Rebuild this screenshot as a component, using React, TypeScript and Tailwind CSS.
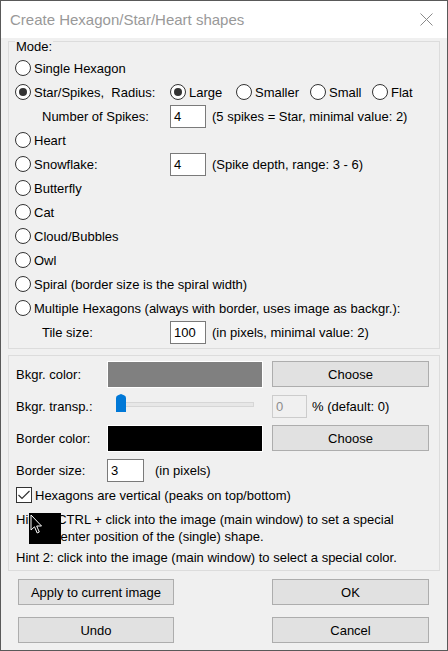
import React from "react";

const font = { fontFamily: '"Liberation Sans", Arial, sans-serif' };

function Radio({ checked, label, className = "" }: { checked?: boolean; label: string; className?: string }) {
  return (
    <div className={`flex items-center gap-[3px] ${className}`}>
      <span className="flex h-[16px] w-[16px] shrink-0 items-center justify-center rounded-full border border-[#333333] bg-white">
        {checked ? <span className="h-[8px] w-[8px] rounded-full bg-[#333333]" /> : null}
      </span>
      <span className="whitespace-pre">{label}</span>
    </div>
  );
}

function TextBox({ value, w = "w-[36px]", disabled }: { value: string; w?: string; disabled?: boolean }) {
  return (
    <div
      className={`flex h-[23px] shrink-0 items-center pl-[3px] ${w} ${
        disabled ? "border border-[#cccccc] bg-[#f0f0f0] text-[#8d8d8d]" : "border border-[#7a7a7a] bg-white"
      }`}
    >
      {value}
    </div>
  );
}

function Button({ label, w = "w-[157px]" }: { label: string; w?: string }) {
  return (
    <div className={`flex h-[26px] shrink-0 items-center justify-center border border-[#adadad] bg-[#e1e1e1] ${w}`}>
      {label}
    </div>
  );
}

export default function App() {
  return (
    <div
      className="flex h-[651px] w-[448px] flex-col overflow-hidden border border-[#595959] bg-[#f0f0f0] text-[13px] leading-[15px] text-black"
      style={font}
    >
      {/* title bar */}
      <div className="flex h-[37px] shrink-0 items-center justify-between bg-white pl-[9px] pr-[14px]">
        <span className="text-[15px] text-[#999999]">Create Hexagon/Star/Heart shapes</span>
        <svg width="13" height="13" viewBox="0 0 13 13">
          <path d="M0.5 0.5 L12.5 12.5 M12.5 0.5 L0.5 12.5" stroke="#8a8a8a" strokeWidth="1" fill="none" />
        </svg>
      </div>

      {/* Mode group */}
      <div className="relative mx-[7px] mt-[3px] border border-[#dcdcdc] pb-[4px] pl-[6px] pt-[14px]">
        <span className="absolute left-[6px] top-[-3px] bg-[#f0f0f0] px-[1px]">Mode:</span>
        <div className="flex h-[24px] items-center">
          <Radio label="Single Hexagon" />
        </div>
        <div className="flex h-[24px] items-center">
          <Radio checked label="Star/Spikes,  Radius:" className="w-[155px]" />
          <Radio checked label="Large" className="w-[66px]" />
          <Radio label="Smaller" className="w-[74px]" />
          <Radio label="Small" className="w-[62px]" />
          <Radio label="Flat" />
        </div>
        <div className="flex h-[24px] items-center">
          <span className="w-[155px] pl-[27px]">Number of Spikes:</span>
          <TextBox value="4" />
          <span className="ml-[6px]">(5 spikes = Star, minimal value: 2)</span>
        </div>
        <div className="flex h-[24px] items-center">
          <Radio label="Heart" />
        </div>
        <div className="flex h-[24px] items-center">
          <Radio label="Snowflake:" className="w-[155px]" />
          <TextBox value="4" />
          <span className="ml-[6px]">(Spike depth, range: 3 - 6)</span>
        </div>
        <div className="flex h-[24px] items-center">
          <Radio label="Butterfly" />
        </div>
        <div className="flex h-[24px] items-center">
          <Radio label="Cat" />
        </div>
        <div className="flex h-[24px] items-center">
          <Radio label="Cloud/Bubbles" />
        </div>
        <div className="flex h-[24px] items-center">
          <Radio label="Owl" />
        </div>
        <div className="flex h-[24px] items-center">
          <Radio label="Spiral (border size is the spiral width)" />
        </div>
        <div className="flex h-[24px] items-center">
          <Radio label="Multiple Hexagons (always with border, uses image as backgr.):" />
        </div>
        <div className="flex h-[24px] items-center">
          <span className="w-[155px] pl-[27px]">Tile size:</span>
          <TextBox value="100" />
          <span className="ml-[6px]">(in pixels, minimal value: 2)</span>
        </div>
      </div>

      {/* Colour group */}
      <div className="relative mx-[7px] mt-[6px] h-[216px] border border-[#dcdcdc] pl-[7px] pt-[4px]">
        <div className="flex h-[28px] items-center">
          <span className="w-[91px]">Bkgr. color:</span>
          <div className="h-[27px] w-[156px] border border-white bg-[#808080]" />
          <div className="ml-[9px]">
            <Button label="Choose" />
          </div>
        </div>
        <div className="mt-[4px] flex h-[28px] items-center">
          <span className="w-[91px]">Bkgr. transp.:</span>
          <div className="relative h-[28px] w-[156px]">
            <div className="absolute left-[9px] top-[10px] h-[5px] w-[138px] border border-[#d6d6d6] bg-[#e7e7e7]" />
            <svg className="absolute left-[9px] top-[2px]" width="10" height="18" viewBox="0 0 10 18">
              <path d="M0 4 Q0 2 2 1.2 L5 0 L8 1.2 Q10 2 10 4 V18 H0 Z" fill="#0078d7" />
            </svg>
          </div>
          <div className="ml-[9px]">
            <TextBox value="0" w="w-[35px]" disabled />
          </div>
          <span className="ml-[5px]">% (default: 0)</span>
        </div>
        <div className="mt-[4px] flex h-[28px] items-center">
          <span className="w-[91px]">Border color:</span>
          <div className="h-[27px] w-[156px] border border-white bg-black" />
          <div className="ml-[9px]">
            <Button label="Choose" />
          </div>
        </div>
        <div className="mt-[4px] flex h-[28px] items-center">
          <span className="w-[91px]">Border size:</span>
          <TextBox value="3" w="w-[37px]" />
          <span className="ml-[11px]">(in pixels)</span>
        </div>
        <div className="flex h-[22px] items-center gap-[3px]">
          <span className="flex h-[16px] w-[16px] items-center justify-center border border-[#333333] bg-white">
            <svg width="12" height="10" viewBox="0 0 12 10">
              <path d="M0.5 5 L4 8.5 L11.5 1" stroke="#333333" strokeWidth="1.2" fill="none" />
            </svg>
          </span>
          <span>Hexagons are vertical (peaks on top/bottom)</span>
        </div>
        <div className="relative mt-[5px] leading-[17px]">
          <div>Hint 1: CTRL + click into the image (main window) to set a special</div>
          <div className="pl-[38px]">center position of the (single) shape.</div>
          <div className="absolute left-[13px] top-[2px] h-[31px] w-[32px] bg-black">
            <svg className="absolute left-[1px] top-[1px]" width="14" height="21" viewBox="0 0 14 21">
              <path d="M1 1 L1 16 L4.5 12.8 L7.2 19 L9.3 18 L6.7 12 L11.5 12 Z" fill="black" stroke="white" strokeWidth="1" />
            </svg>
          </div>
        </div>
        <div className="mt-[4px] leading-[17px]">Hint 2: click into the image (main window) to select a special color.</div>
      </div>

      {/* buttons */}
      <div className="mt-[8px] flex justify-between pl-[17px] pr-[18px]">
        <Button label="Apply to current image" w="w-[156px]" />
        <Button label="OK" />
      </div>
      <div className="mt-[12px] flex justify-between pl-[17px] pr-[18px]">
        <Button label="Undo" w="w-[156px]" />
        <Button label="Cancel" />
      </div>
    </div>
  );
}
